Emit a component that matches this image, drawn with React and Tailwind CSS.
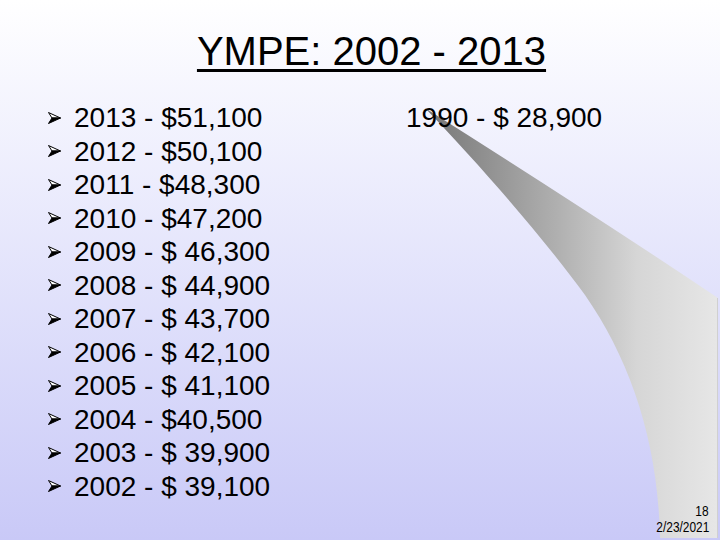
import React from "react";

const rows = [
  "2013 - $51,100",
  "2012 - $50,100",
  "2011 - $48,300",
  "2010 - $47,200",
  "2009 - $ 46,300",
  "2008 - $ 44,900",
  "2007 - $ 43,700",
  "2006 - $ 42,100",
  "2005 - $ 41,100",
  "2004 - $40,500",
  "2003 - $ 39,900",
  "2002 - $ 39,100",
];

function Arrow() {
  return (
    <svg width="13" height="12" viewBox="0 0 13 12" className="shrink-0">
      <polygon points="0.5,0.5 12.5,6 4,6" fill="#ffffff" stroke="#000" strokeWidth="1" strokeLinejoin="round" />
      <polygon points="0.5,11.5 12.5,6 4,6" fill="#000" stroke="#000" strokeWidth="1" strokeLinejoin="round" />
    </svg>
  );
}

function Curl() {
  return (
    <svg className="absolute inset-0" width="720" height="540" viewBox="0 0 720 540">
      <defs>
        <linearGradient id="curlg" gradientUnits="userSpaceOnUse" x1="425" y1="0" x2="720" y2="0">
          <stop offset="0" stopColor="#767676" />
          <stop offset="0.45" stopColor="#b0b0b0" />
          <stop offset="0.72" stopColor="#d6d6d6" />
          <stop offset="1" stopColor="#e7e7e7" />
        </linearGradient>
      </defs>
      <path
        d="M425,108 Q590,212 718,298 L718,538 L660,538 C658,440 630,360 585,295 C545,240 480,165 425,108 Z"
        fill="url(#curlg)"
      />
      <line x1="717.5" y1="298" x2="717.5" y2="538" stroke="#d0d0d0" strokeWidth="1" />
    </svg>
  );
}

export default function App() {
  return (
    <div
      className="relative w-[720px] h-[540px] overflow-hidden bg-gradient-to-b from-white to-[#c9c9f7] text-black"
      style={{ fontFamily: '"Liberation Sans", Arial, sans-serif' }}
    >
      <Curl />
      <div className="relative flex flex-col h-full">
        <div className="pt-[31px] pl-[23px] flex justify-center">
          <h1 className="text-[40px] leading-[40px] underline decoration-[3px] underline-offset-[4px]">
            YMPE: 2002 - 2013
          </h1>
        </div>
        <div className="flex mt-[30px]">
          <ul className="w-[406px] pl-[48px] flex flex-col">
            {rows.map((r) => (
              <li key={r} className="flex items-center gap-[13px] text-[28px] leading-[33.5px] whitespace-pre">
                <Arrow />
                <span>{r}</span>
              </li>
            ))}
          </ul>
          <div className="text-[28px] leading-[33.5px] whitespace-pre">1990 - $ 28,900</div>
        </div>
        <div className="mt-auto pr-[11px] pb-[10px] flex flex-col items-end text-[14px] leading-[16px]">
          <span className="inline-block origin-right scale-x-[0.85]">18</span>
          <span className="inline-block origin-right scale-x-[0.85]">2/23/2021</span>
        </div>
      </div>
    </div>
  );
}
